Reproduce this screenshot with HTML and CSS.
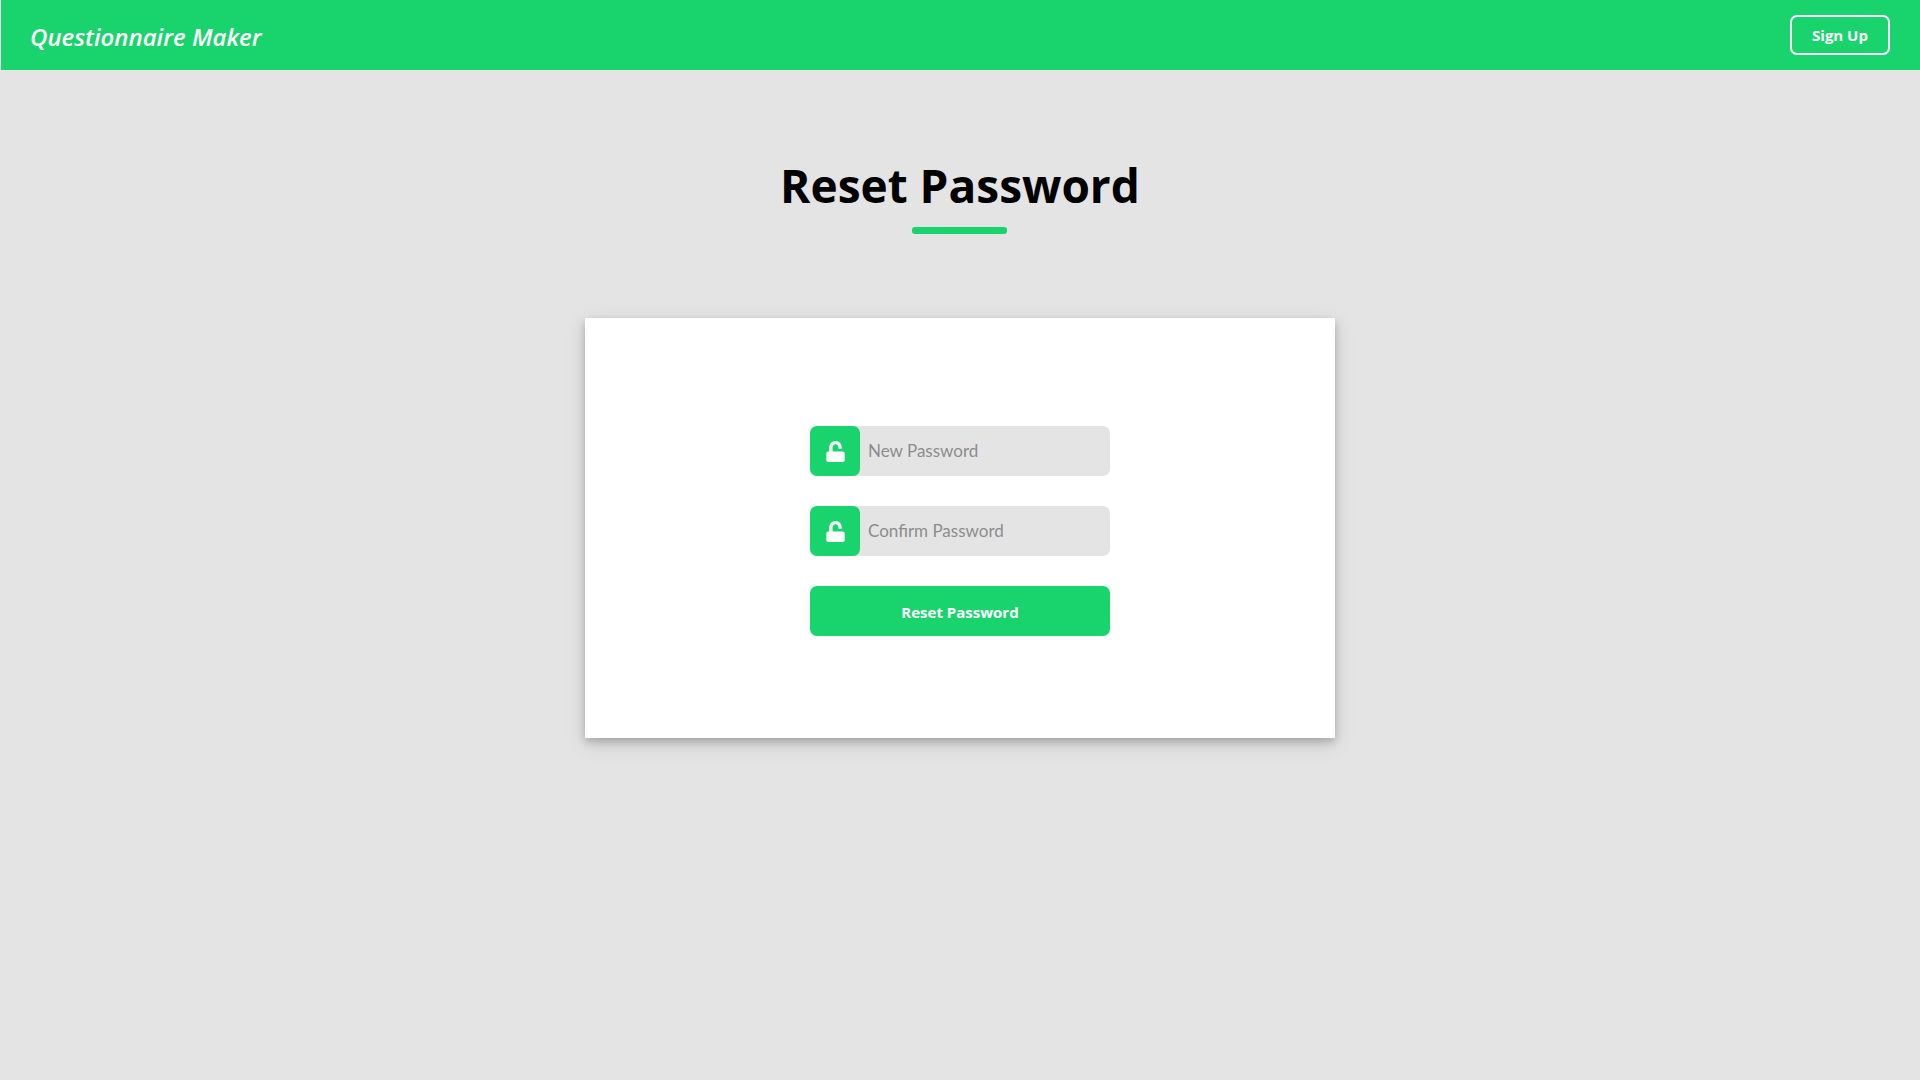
FILE: index.html
```html
<!DOCTYPE html>
<html lang="en">
<head>
  <meta charset="utf-8">
  <meta name="viewport" content="width=device-width, initial-scale=1">
  <title>Questionnaire Maker</title>
  <link rel="stylesheet" href="styles.css">
</head>
<body>
  <header class="navbar">
    <a class="brand" href="#">Questionnaire Maker</a>
    <button class="signup" type="button">Sign Up</button>
  </header>
  <main class="page">
    <h1 class="title">Reset Password</h1>
    <form class="card">
      <div class="field">
        <label class="field-icon" for="new-password" aria-label="New Password">
          <svg class="lock" viewBox="0 0 448 512" aria-hidden="true"><path d="M400 256H152V152.900c0-39.600 31.700-72.500 71.300-72.900 40-.4 72.700 32.100 72.700 72v16c0 13.300 10.700 24 24 24h32c13.300 0 24-10.700 24-24v-16C376 68 307.500-.3 223.500 0 139.500.3 72 69.500 72 153.500V256H48c-26.500 0-48 21.500-48 48v160c0 26.500 21.500 48 48 48h352c26.500 0 48-21.500 48-48V304c0-26.500-21.500-48-48-48z"/></svg>
        </label>
        <input class="field-input" id="new-password" type="password" placeholder="New Password">
      </div>
      <div class="field">
        <label class="field-icon" for="confirm-password" aria-label="Confirm Password">
          <svg class="lock" viewBox="0 0 448 512" aria-hidden="true"><path d="M400 256H152V152.900c0-39.600 31.700-72.500 71.300-72.900 40-.4 72.700 32.100 72.700 72v16c0 13.300 10.700 24 24 24h32c13.300 0 24-10.700 24-24v-16C376 68 307.500-.3 223.500 0 139.500.3 72 69.500 72 153.500V256H48c-26.500 0-48 21.500-48 48v160c0 26.500 21.500 48 48 48h352c26.500 0 48-21.500 48-48V304c0-26.500-21.500-48-48-48z"/></svg>
        </label>
        <input class="field-input" id="confirm-password" type="password" placeholder="Confirm Password">
      </div>
      <button class="submit" type="submit">Reset Password</button>
    </form>
  </main>
</body>
</html>
```

FILE: styles.css
```css
* {
  box-sizing: border-box;
}

body {
  margin: 0;
  background: #e4e4e4;
  color: #000;
  font-family: "Open Sans", "Noto Sans", sans-serif;
}

.navbar {
  display: flex;
  align-items: center;
  justify-content: space-between;
  height: 70px;
  padding: 0 30px 0 29px;
  border-left: 1px solid #f2f2f2;
  background: #19d46c;
}

.brand {
  padding-top: 4px;
  color: #fff;
  font-size: 24px;
  font-style: italic;
  font-weight: 600;
  line-height: 36px;
  text-decoration: none;
}

.signup {
  width: 100px;
  height: 40px;
  padding: 0;
  border: 2px solid #fff;
  border-radius: 7px;
  background: transparent;
  color: #fff;
  font: 700 15px/20px "Open Sans", "Noto Sans", sans-serif;
}

.page {
  display: flex;
  flex-direction: column;
  align-items: center;
  padding: 80px 20px;
}

.title {
  display: flex;
  flex-direction: column;
  align-items: center;
  margin: 0 0 84px;
  font-size: 46px;
  font-weight: 700;
  line-height: 70px;
}

.title::after {
  content: "";
  width: 95px;
  height: 7px;
  margin-top: 7px;
  border-radius: 3px;
  background: #19d46c;
}

.card {
  display: flex;
  flex-direction: column;
  align-items: center;
  gap: 30px;
  width: 100%;
  max-width: 750px;
  padding: 108px 20px 102px;
  background: #fff;
  box-shadow: 0 4px 8px rgba(0, 0, 0, 0.2), 0 6px 20px rgba(0, 0, 0, 0.12);
}

.field {
  display: flex;
  width: 100%;
  max-width: 300px;
  height: 50px;
  border-radius: 7px;
  background: #e4e4e4;
}

.field-icon {
  display: flex;
  flex: none;
  align-items: center;
  justify-content: center;
  width: 50px;
  border-radius: 7px;
  background: #19d46c;
}

.lock {
  width: 19px;
  height: 21px;
  fill: #fff;
}

.field-input {
  flex: 1;
  min-width: 0;
  padding: 0 8px;
  border: 0;
  border-radius: 7px;
  background: transparent;
  font: 400 17px/24px Lato, "Open Sans", sans-serif;
}

.field-input::placeholder {
  color: #8c8c8c;
}

.submit {
  width: 100%;
  max-width: 300px;
  height: 50px;
  padding: 2px 0 0;
  border: 0;
  border-radius: 7px;
  background: #19d46c;
  color: #fff;
  font: 700 15px/20px "Open Sans", "Noto Sans", sans-serif;
}
```
